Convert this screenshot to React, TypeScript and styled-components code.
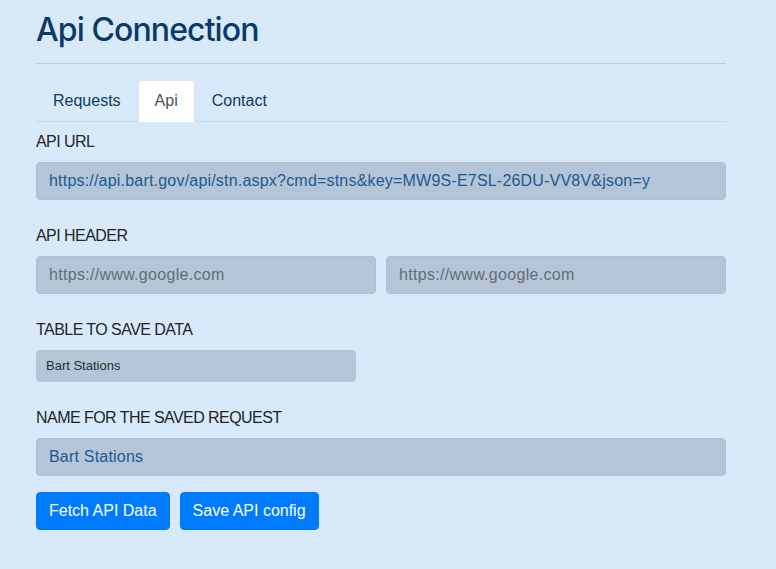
import styled, { createGlobalStyle } from 'styled-components'

const GlobalStyle = createGlobalStyle`
  html, body {
    margin: 0;
    padding: 0;
    background: #d8eaf9;
    font-family: "Liberation Sans", Arial, sans-serif;
    color: #212529;
  }
  * { box-sizing: border-box; }
`

const Page = styled.div`
  min-height: 569px;
  padding: 8px 50px 0 36px;
  width: 776px;
`

const Inner = styled.div`
  width: 690px;
`

const Title = styled.h2`
  margin: 0;
  padding-top: 3px;
  font-family: Inter, "Liberation Sans", sans-serif;
  font-size: 32px;
  line-height: 38px;
  font-weight: 500;
  letter-spacing: -0.9px;
  color: #0b3a66;
`

const Rule = styled.hr`
  margin: 14px 0 16px;
  border: 0;
  border-top: 1px solid #b8cfe3;
`

const Tabs = styled.div`
  display: flex;
  border-bottom: 1px solid #c4d9ec;
`

const Tab = styled.div<{ $active?: boolean }>`
  padding: 8px 16px;
  font-size: 16px;
  line-height: 24px;
  margin-bottom: -1px;
  border: 1px solid ${p => (p.$active ? '#dee2e6' : 'transparent')};
  border-bottom-color: ${p => (p.$active ? '#fff' : 'transparent')};
  border-radius: 4px 4px 0 0;
  background: ${p => (p.$active ? '#fff' : 'transparent')};
  color: ${p => (p.$active ? '#495057' : '#0b3a66')};
`

const Content = styled.div`
  padding-top: 8px;
`

const Group = styled.div<{ $gap?: number }>`
  margin-bottom: ${p => p.$gap ?? 24}px;
`

const Label = styled.div`
  font-size: 16px;
  line-height: 24px;
  margin-bottom: 8px;
  letter-spacing: -0.55px;
  color: #212529;
`

const Row = styled.div`
  display: flex;
  gap: 10px;
`

const Input = styled.div<{ $placeholder?: boolean }>`
  flex: 1;
  height: 38px;
  padding: 6px 12px;
  font-size: 16px;
  line-height: 24px;
  letter-spacing: ${p => (p.$placeholder ? 0.3 : 0.2)}px;
  background: #b3c5d7;
  border: 1px solid #aebfd1;
  border-radius: 4px;
  color: ${p => (p.$placeholder ? '#646d75' : '#1b5a94')};
  white-space: nowrap;
  overflow: hidden;
`

const Select = styled.div`
  width: 320px;
  height: 32px;
  padding: 6px 10px;
  font-size: 13px;
  line-height: 19px;
  background: #b3c5d7;
  border-radius: 4px;
  color: #2b2f33;
`

const Buttons = styled.div`
  display: flex;
  gap: 10px;
`

const Button = styled.button`
  height: 38px;
  padding: 6px 12px;
  font-family: inherit;
  font-size: 16px;
  line-height: 24px;
  color: #fff;
  background: #007bff;
  border: 1px solid #007bff;
  border-radius: 4px;
`

export default function App() {
  return (
    <>
      <GlobalStyle />
      <Page>
        <Inner>
          <Title>Api Connection</Title>
          <Rule />
          <Tabs>
            <Tab>Requests</Tab>
            <Tab $active>Api</Tab>
            <Tab>Contact</Tab>
          </Tabs>
          <Content>
            <Group>
              <Label>API URL</Label>
              <Input>https://api.bart.gov/api/stn.aspx?cmd=stns&amp;key=MW9S-E7SL-26DU-VV8V&amp;json=y</Input>
            </Group>
            <Group>
              <Label>API HEADER</Label>
              <Row>
                <Input $placeholder>https://www.google.com</Input>
                <Input $placeholder>https://www.google.com</Input>
              </Row>
            </Group>
            <Group>
              <Label>TABLE TO SAVE DATA</Label>
              <Select>Bart Stations</Select>
            </Group>
            <Group $gap={16}>
              <Label>NAME FOR THE SAVED REQUEST</Label>
              <Input>Bart Stations</Input>
            </Group>
            <Buttons>
              <Button>Fetch API Data</Button>
              <Button>Save API config</Button>
            </Buttons>
          </Content>
        </Inner>
      </Page>
    </>
  )
}
